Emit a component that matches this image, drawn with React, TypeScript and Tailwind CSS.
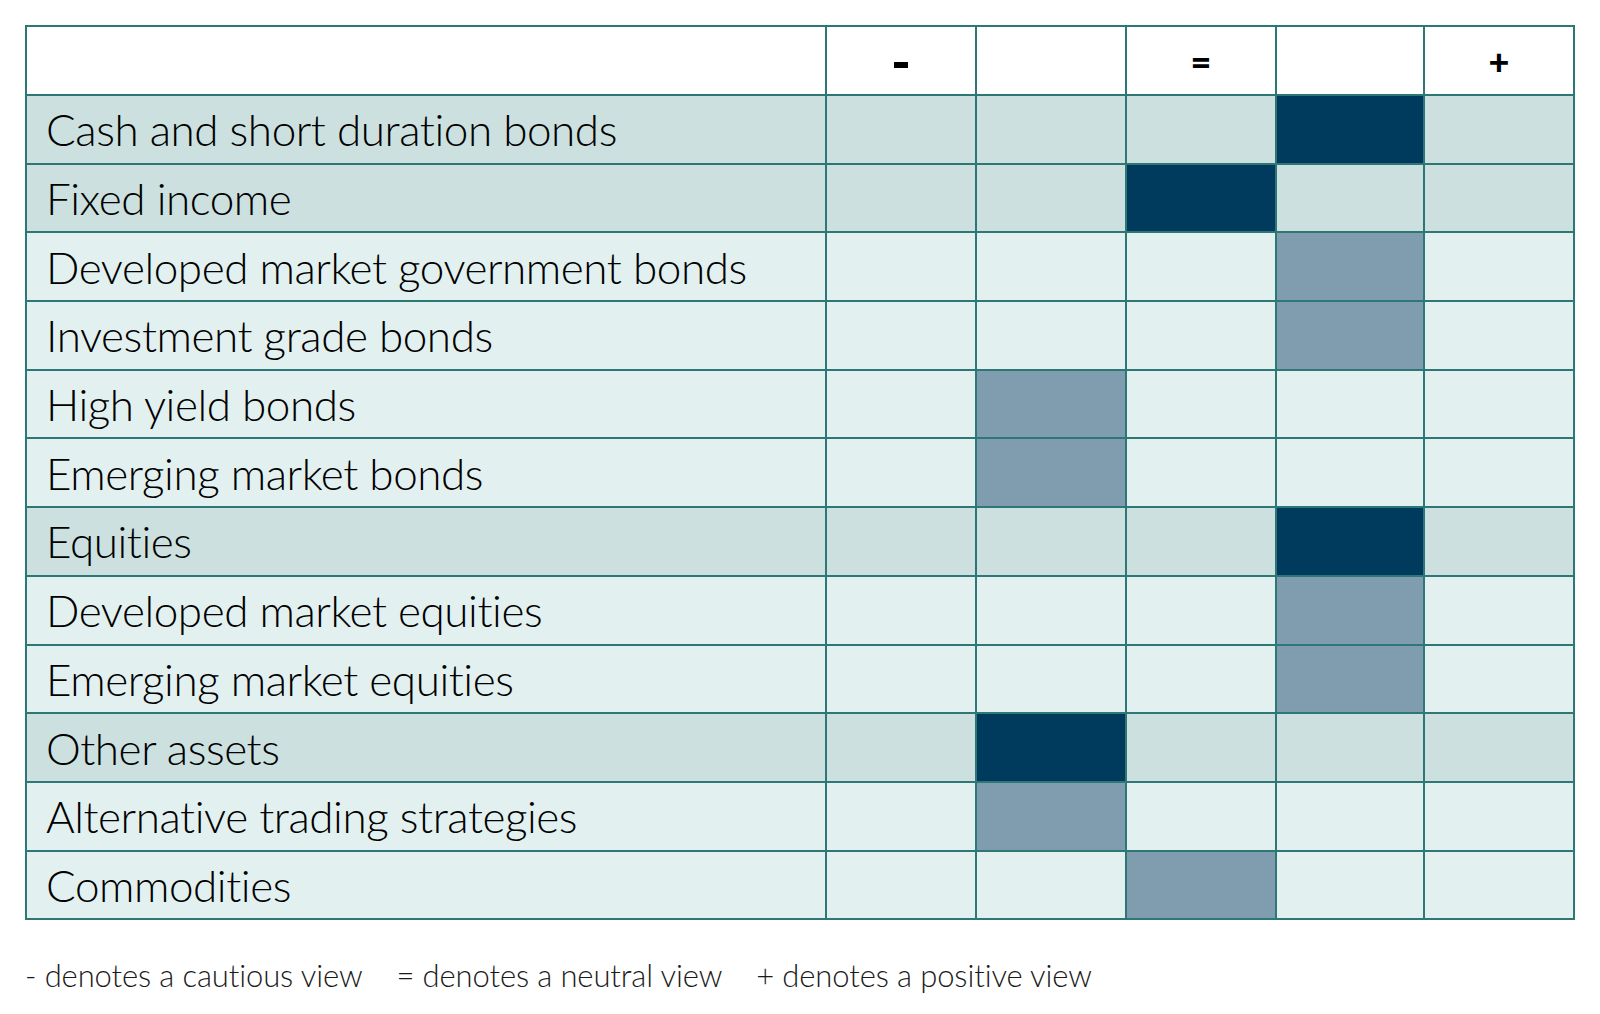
const rows: { label: string; main: boolean; col: number }[] = [
  { label: "Cash and short duration bonds", main: true, col: 3 },
  { label: "Fixed income", main: true, col: 2 },
  { label: "Developed market government bonds", main: false, col: 3 },
  { label: "Investment grade bonds", main: false, col: 3 },
  { label: "High yield bonds", main: false, col: 1 },
  { label: "Emerging market bonds", main: false, col: 1 },
  { label: "Equities", main: true, col: 3 },
  { label: "Developed market equities", main: false, col: 3 },
  { label: "Emerging market equities", main: false, col: 3 },
  { label: "Other assets", main: true, col: 1 },
  { label: "Alternative trading strategies", main: false, col: 1 },
  { label: "Commodities", main: false, col: 2 },
];

const headers = ["-", "", "=", "", "+"];

export default function App() {
  return (
    <div className="min-h-screen bg-white pl-[25px] pt-[25px] font-['Lato',sans-serif] text-black">
      <table className="table-fixed border-collapse">
        <colgroup>
          <col className="w-[800px]" />
          <col className="w-[150px]" />
          <col className="w-[150px]" />
          <col className="w-[150px]" />
          <col className="w-[148px]" />
          <col className="w-[150px]" />
        </colgroup>
        <thead>
          <tr className="h-[69px] bg-white">
            <th className="border-2 border-[#2d7777]" />
            {headers.map((h, i) => (
              <th key={i} className="border-2 border-[#2d7777] text-center text-[36px] font-black leading-none">
                {h === "-" ? <span className="inline-block h-[6px] w-[14px] bg-black align-middle" /> : h}
              </th>
            ))}
          </tr>
        </thead>
        <tbody>
          {rows.map((r) => (
            <tr key={r.label} className={`h-[68.7px] ${r.main ? "bg-[#cce0df]" : "bg-[#e3f0f0]"}`}>
              <td className="border-2 border-[#2d7777] pl-[19px] text-[44px] font-light leading-none tracking-[-0.01em]">
                {r.label}
              </td>
              {headers.map((_, i) => (
                <td
                  key={i}
                  className={`border-2 border-[#2d7777] ${
                    i === r.col ? (r.main ? "bg-[#003a5c]" : "bg-[#809caf]") : ""
                  }`}
                />
              ))}
            </tr>
          ))}
        </tbody>
      </table>
      <div className="mt-[32px] flex gap-[34px] text-[31px] font-light tracking-[-0.004em] text-[#1a1a1a]">
        <span>- denotes a cautious view</span>
        <span>= denotes a neutral view</span>
        <span>+ denotes a positive view</span>
      </div>
    </div>
  );
}
